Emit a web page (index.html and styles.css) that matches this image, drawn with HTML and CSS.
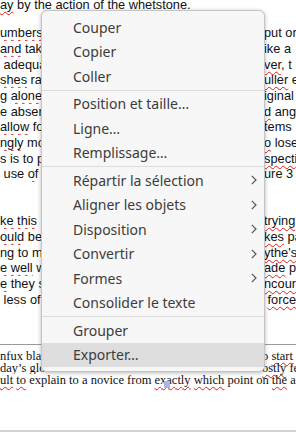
FILE: index.html
```html
<!DOCTYPE html>
<html lang="fr">
<head>
  <meta charset="UTF-8">
  <title>Menu contextuel</title>
  <link rel="stylesheet" href="styles.css">
</head>
<body>

<div class="doc">
  <div class="row top"><span class="sp">ay</span> by the action of the <span class="sp">whetstone</span>.</div>

  <div class="para first">
    <div class="row"><span class="left"><span class="sp">umbers</span> of the</span><span class="right">put or</span></div>
    <div class="row"><span class="left"><span class="sp">and</span> take</span><span class="right">ike a</span></div>
    <div class="row"><span class="left">&nbsp;<span class="sp">adequa</span></span><span class="right"><span class="sp">ver</span>, t</span></div>
    <div class="row"><span class="left"><span class="sp">shes</span> rap</span><span class="right"><span class="sp">uller</span> e</span></div>
    <div class="row"><span class="left">g <span class="sp">alone</span></span><span class="right">iginal</span></div>
    <div class="row"><span class="left"><span class="sp">e absen</span></span><span class="right"><span class="sp">d</span> angl</span></div>
    <div class="row"><span class="left"><span class="sp">allow</span> for</span><span class="right">tems</span></div>
    <div class="row"><span class="left"><span class="sp">ngly</span> mo</span><span class="right"><span class="sp">o</span> lose</span></div>
    <div class="row"><span class="left"><span class="sp">s</span> is <span class="sp">to</span> pr</span><span class="right"><span class="sp">specti</span></span></div>
    <div class="row"><span class="left">&nbsp;use <span class="sp">of</span></span><span class="right">ure 3</span></div>
  </div>

  <div class="para second">
    <div class="row"><span class="left"><span class="sp">ke this</span></span><span class="right"><span class="sp">trying</span></span></div>
    <div class="row"><span class="left"><span class="sp">ould</span> be</span><span class="right"><span class="sp">kes</span> pa</span></div>
    <div class="row"><span class="left"><span class="sp">ng</span> to ma</span><span class="right"><span class="sp">ythe's</span></span></div>
    <div class="row"><span class="left"><span class="sp">e well</span> w</span><span class="right"><span class="sp">ade</span> p</span></div>
    <div class="row"><span class="left"><span class="sp">e</span> they s</span><span class="right"><span class="sp">ncoura</span></span></div>
    <div class="row"><span class="left">&nbsp;<span class="sp">less</span> of</span><span class="right">&nbsp;<span class="sp">force</span></span></div>
  </div>

  <div class="rule"></div>

  <div class="serif">
    <div class="srow"><span class="left"><span class="sp">nfux</span> blade</span><span class="right start">o <span class="sp">start</span></span></div>
    <div class="srow"><span class="left"><span class="sp">day’s glo</span></span><span class="right"><span class="sp">ostly</span> fe</span></div>
    <div class="srow"><span class="sp">ult</span> <span class="sp">to</span> explain to a novice from <span class="sp">exactly</span> <span class="sp">which</span> point on <span class="sp">the</span> a<span class="caret"></span></div>
  </div>

  <div class="rule light"></div>
</div>

<div class="menu">
  <div class="item">Couper</div>
  <div class="item">Copier</div>
  <div class="item">Coller</div>
  <div class="sep"></div>
  <div class="item">Position et taille…</div>
  <div class="item">Ligne…</div>
  <div class="item">Remplissage…</div>
  <div class="sep"></div>
  <div class="item">Répartir la sélection<svg class="chev" width="6" height="10" viewBox="0 0 6 10"><path d="M0.8 0.8 L5 5 L0.8 9.2"/></svg></div>
  <div class="item">Aligner les objets<svg class="chev" width="6" height="10" viewBox="0 0 6 10"><path d="M0.8 0.8 L5 5 L0.8 9.2"/></svg></div>
  <div class="item">Disposition<svg class="chev" width="6" height="10" viewBox="0 0 6 10"><path d="M0.8 0.8 L5 5 L0.8 9.2"/></svg></div>
  <div class="item">Convertir<svg class="chev" width="6" height="10" viewBox="0 0 6 10"><path d="M0.8 0.8 L5 5 L0.8 9.2"/></svg></div>
  <div class="item">Formes<svg class="chev" width="6" height="10" viewBox="0 0 6 10"><path d="M0.8 0.8 L5 5 L0.8 9.2"/></svg></div>
  <div class="item">Consolider le texte</div>
  <div class="sep"></div>
  <div class="item">Grouper</div>
  <div class="item active">Exporter…</div>
</div>

</body>
</html>
```

FILE: styles.css
```css
body {
  margin: 0;
  width: 296px;
  height: 442px;
  overflow: hidden;
  background-color: #fff;
  position: relative;
}
.doc {
  font-family: Arial, "Liberation Sans", sans-serif;
  font-size: 12.8px;
  color: #111;
}
.row {
  white-space: nowrap;
  height: 15.7px;
  line-height: 15.7px;
}
.row.top {
  margin-top: -3px;
}
.para.first {
  margin-top: 12.6px;
}
.para.second {
  margin-top: 31.2px;
}
.left {
  display: inline-block;
  vertical-align: top;
  width: 264px;
  overflow: hidden;
}
.sp {
  text-decoration: underline wavy #e01b1b;
  text-decoration-thickness: 1px;
  text-decoration-skip-ink: none;
  text-underline-offset: 2px;
}
.rule {
  height: 1px;
  background-color: #9a9a9a;
  margin-top: 37px;
}
.rule.light {
  height: 2px;
  background-color: #d2d2d2;
  margin-top: 44px;
}
.serif {
  font-family: "Liberation Serif", "Times New Roman", serif;
  font-size: 12.5px;
  margin-top: 4.7px;
}
.srow {
  white-space: nowrap;
  height: 12px;
  line-height: 12px;
  position: relative;
}
.srow .left {
  width: 262px;
}
.caret {
  position: absolute;
  left: 164px;
  top: 7px;
  width: 6px;
  height: 7px;
  background-color: #a7b8e8;
}

.menu {
  position: absolute;
  left: 41px;
  top: 10px;
  width: 224px;
  box-sizing: border-box;
  padding: 4px 0;
  background-color: #f7f7f7;
  border: 1px solid #c4c4c4;
  border-radius: 6px;
  box-shadow: 0 1px 4px rgba(0, 0, 0, 0.28);
  font-family: "Noto Sans", "Open Sans", sans-serif;
  font-size: 14px;
  color: #3c3c3c;
}
.item {
  height: 24.5px;
  display: flex;
  align-items: center;
  justify-content: space-between;
  padding: 0 7px 0 31px;
  white-space: nowrap;
}
.item.active {
  background-color: #dedede;
}
.sep {
  height: 1px;
  margin: 1px 0;
  background-color: #dcdcdc;
}
.chev path {
  fill: none;
  stroke: #555;
  stroke-width: 1.2;
}
```
